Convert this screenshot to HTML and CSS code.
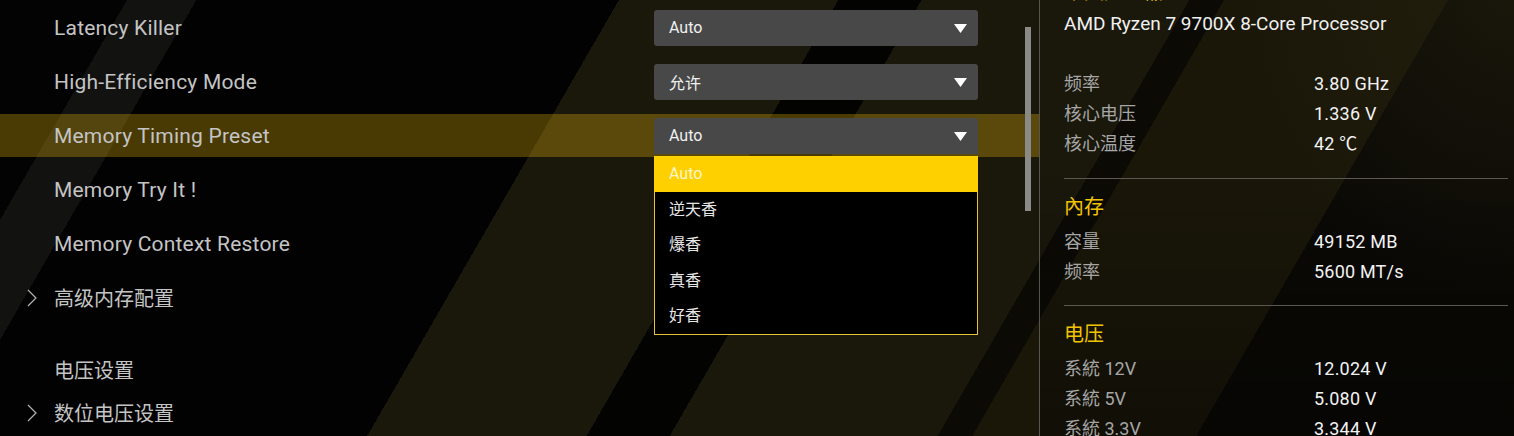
FILE: index.html
```html
<!DOCTYPE html>
<html lang="zh">
<head>
<meta charset="utf-8">
<title>BIOS - Memory</title>
<link rel="stylesheet" href="styles.css">
</head>
<body>
<div class="screen">
  <section class="settings">
    <div class="row">
      <span class="chev"></span>
      <span class="label">Latency Killer</span>
      <div class="select"><span class="value">Auto</span><svg class="caret" width="13" height="9" viewBox="0 0 13 9"><polygon points="0,0 13,0 6.5,9" fill="#fff"/></svg></div>
    </div>
    <div class="row">
      <span class="chev"></span>
      <span class="label">High-Efficiency Mode</span>
      <div class="select"><span class="value">允许</span><svg class="caret" width="13" height="9" viewBox="0 0 13 9"><polygon points="0,0 13,0 6.5,9" fill="#fff"/></svg></div>
    </div>
    <div class="row active">
      <span class="chev"></span>
      <span class="label">Memory Timing Preset</span>
      <div class="select open"><span class="value">Auto</span><svg class="caret" width="13" height="9" viewBox="0 0 13 9"><polygon points="0,0 13,0 6.5,9" fill="#fff"/></svg>
        <ul class="menu">
          <li class="selected">Auto</li>
          <li>逆天香</li>
          <li>爆香</li>
          <li>真香</li>
          <li>好香</li>
        </ul>
      </div>
    </div>
    <div class="row">
      <span class="chev"></span>
      <span class="label">Memory Try It !</span>
    </div>
    <div class="row">
      <span class="chev"></span>
      <span class="label">Memory Context Restore</span>
    </div>
    <div class="row">
      <span class="chev"><svg width="10" height="18" viewBox="0 0 10 18"><polyline points="1,1 9,9 1,17" fill="none" stroke="#b4b4b4" stroke-width="1.2"/></svg></span>
      <span class="label cjk">高级内存配置</span>
    </div>
    <div class="row group-title">
      <span class="chev"></span>
      <span class="label cjk">电压设置</span>
    </div>
    <div class="row">
      <span class="chev"><svg width="10" height="18" viewBox="0 0 10 18"><polyline points="1,1 9,9 1,17" fill="none" stroke="#b4b4b4" stroke-width="1.2"/></svg></span>
      <span class="label cjk">数位电压设置</span>
    </div>
    <div class="scrollbar"></div>
  </section>

  <aside class="info">
    <div class="group first">
      <h2 class="heading">中央处理器</h2>
      <div class="cpu-name">AMD Ryzen 7 9700X 8-Core Processor</div>
      <dl class="stats">
        <dt>频率</dt><dd>3.80 GHz</dd>
        <dt>核心电压</dt><dd>1.336 V</dd>
        <dt>核心温度</dt><dd>42 ℃</dd>
      </dl>
    </div>
    <div class="group">
      <h2 class="heading">內存</h2>
      <dl class="stats">
        <dt>容量</dt><dd>49152 MB</dd>
        <dt>频率</dt><dd>5600 MT/s</dd>
      </dl>
    </div>
    <div class="group">
      <h2 class="heading">电压</h2>
      <dl class="stats">
        <dt>系統 12V</dt><dd>12.024 V</dd>
        <dt>系統 5V</dt><dd>5.080 V</dd>
        <dt>系統 3.3V</dt><dd>3.344 V</dd>
      </dl>
    </div>
  </aside>
</div>
</body>
</html>
```

FILE: styles.css
```css
* { box-sizing: border-box; }

html, body {
  margin: 0;
  padding: 0;
  height: 100%;
  overflow: hidden;
}

body {
  font-family: Roboto, "Noto Sans CJK SC", sans-serif;
  color: #c8c8c8;
  background-color: #000;
  background-image: linear-gradient(120deg,
    #030303 0px, #030303 110px,
    #121211 110px, #121211 170px,
    #020202 170px, #020202 536px,
    #1a180b 536px, #1a180b 726px,
    #030302 726px, #030302 798px,
    #1a180b 798px, #1a180b 1030px,
    #0b0a05 1030px, #0b0a05 1060px,
    #1a1709 1060px, #1a1709 1254px,
    #0a0905 1254px, #0a0905 1600px);
}

.screen {
  display: flex;
  height: 436px;
  width: 1514px;
  overflow: hidden;
}

/* ---------- settings list ---------- */
.settings {
  position: relative;
  width: 1040px;
  flex: none;
  border-right: 1px solid #55554f;
  display: flex;
  flex-direction: column;
  padding-top: 6px;
}

.row {
  display: flex;
  align-items: center;
  height: 43px;
  flex: none;
  margin-bottom: 11px;
  padding-left: 24px;
}

.row.active {
  background: rgba(240, 190, 10, 0.3);
}

.row.group-title {
  margin-top: 18px;
  margin-bottom: 0;
}

.chev {
  width: 30px;
  height: 18px;
  flex: none;
  display: flex;
  align-items: center;
  padding-left: 3px;
}

.label {
  width: 600px;
  flex: none;
  font-size: 21px;
  letter-spacing: 0.2px;
  color: #c4c4c4;
}

.label.cjk {
  font-size: 20px;
  letter-spacing: 0;
}

.select {
  position: relative;
  width: 324px;
  height: 36px;
  background: #484848;
  border-radius: 3px;
  display: flex;
  align-items: center;
  justify-content: space-between;
  padding: 0 11px 0 15px;
  color: #f0f0f0;
  font-size: 16px;
}

.select.open {
  border-radius: 3px 3px 0 0;
}

.caret {
  margin-top: 2px;
}

.menu {
  position: absolute;
  top: calc(100% + 2px);
  left: 0;
  width: 324px;
  margin: 0;
  padding: 0;
  list-style: none;
  background: #000;
  border: 1px solid #e6c23a;
  border-top: none;
  z-index: 2;
}

.menu li {
  height: 36px;
  line-height: 36px;
  padding-left: 14px;
  color: #e6e6e6;
  font-size: 16px;
}

.menu li + li {
  height: 35.5px;
  line-height: 35.5px;
}

.menu li.selected {
  background: #ffd000;
  color: #fff6cf;
  margin: 0 -1px;
  padding-left: 15px;
}

.scrollbar {
  position: absolute;
  left: 1025px;
  top: 27px;
  width: 6px;
  height: 184px;
  background: #8a8a88;
}

/* ---------- info panel ---------- */
.info {
  flex: 1;
  padding: 0 6px 0 24px;
  margin-top: -23px;
  background:
    radial-gradient(ellipse 60% 70% at 100% 0%, rgba(40, 36, 16, 0.55), rgba(0, 0, 0, 0) 100%),
    linear-gradient(180deg, rgba(0, 0, 0, 0) 40%, rgba(0, 0, 0, 0.35) 100%);
}

.group {
  border-top: 1px solid #5a5850;
  padding: 13px 0 18px;
}

.group.first {
  border-top: none;
  padding: 0 0 19px;
}

.heading {
  margin: 0;
  height: 30px;
  line-height: 30px;
  font-size: 20px;
  font-weight: normal;
  color: #f0c400;
}

.cpu-name {
  height: 34px;
  line-height: 34px;
  font-size: 19px;
  color: #f0f0f0;
  margin-bottom: 28px;
}

.stats {
  margin: 5px 0 0;
  display: grid;
  grid-template-columns: 250px 1fr;
}

.group.first .stats {
  margin-top: 0;
}

.stats dt,
.stats dd {
  margin: 0;
  height: 30px;
  line-height: 30px;
  font-size: 18px;
}

.stats dt {
  color: #a6a6a6;
}

.stats dd {
  color: #f2f2f2;
  letter-spacing: 0.2px;
}
```
